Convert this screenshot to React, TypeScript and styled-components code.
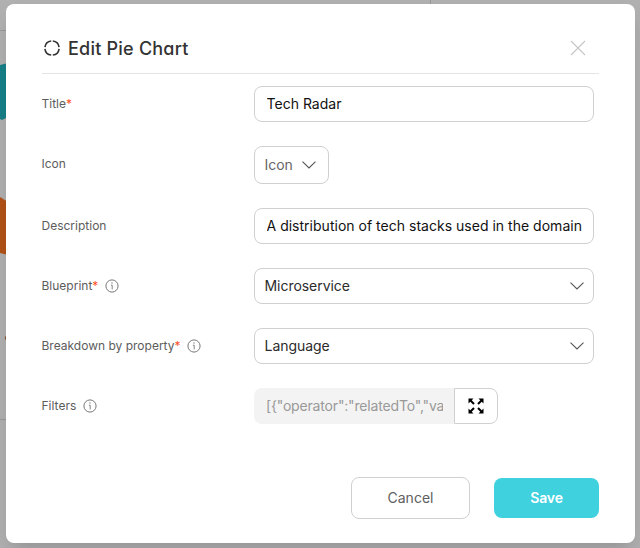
import React from "react";
import styled, { createGlobalStyle, css } from "styled-components";

const GlobalStyle = createGlobalStyle`
  *, *::before, *::after { box-sizing: border-box; }
  body { margin: 0; background: #b1b1b1; font-family: Inter, "Liberation Sans", sans-serif; }
  button, input { font-family: inherit; margin: 0; }
`;

const Page = styled.div`
  position: relative;
  width: 640px;
  height: 548px;
  overflow: hidden;
  padding: 4px 5px 5px 6px;
  background: #b1b1b1;
`;

const Backdrop = styled.svg`
  position: absolute;
  inset: 0;
`;

const Dialog = styled.section`
  position: relative;
  display: flex;
  flex-direction: column;
  width: 629px;
  height: 539px;
  padding: 20px 36px 24px;
  border-radius: 8px;
  background: #fff;
  box-shadow: 0 11px 15px -7px rgba(0, 0, 0, 0.12), 0 14px 30px 3px rgba(0, 0, 0, 0.06);
`;

const Header = styled.header`
  display: flex;
  align-items: center;
  height: 50px;
  padding: 0 0 1px 1px;
  border-bottom: 1px solid #e4e4e4;
`;

const Heading = styled.h1`
  flex: 1;
  margin: 0 0 0 7px;
  padding-top: 2px;
  font-size: 18px;
  font-weight: 500;
  font-feature-settings: "cv11";
  line-height: 24px;
  letter-spacing: 0.22px;
  color: #333;
`;

const CloseButton = styled.button`
  display: flex;
  padding: 0;
  margin-right: 13.5px;
  border: 0;
  background: none;
`;

const Form = styled.form`
  display: flex;
  flex-direction: column;
  gap: 24px;
  padding-top: 12px;
`;

const Row = styled.div`
  display: grid;
  grid-template-columns: 212px 340px;
  align-items: center;
`;

const Label = styled.label<{ $raised?: boolean }>`
  display: flex;
  align-items: center;
  margin-left: -0.5px;
  padding-bottom: ${(p) => (p.$raised ? 2 : 0)}px;
  font-size: 12px;
  line-height: 16px;
  letter-spacing: 0;
  color: #5c5c5c;
  svg { margin-left: 6.5px; }
`;

const Required = styled.span`
  color: #ff5227;
`;

const outlined = css`
  border: 1px solid #d0d0d0;
  border-radius: 8px;
  background: #fff;
`;

const TextField = styled.input`
  ${outlined}
  width: 340px;
  height: 36px;
  padding: 0 10px 1px 11.5px;
  font-size: 14px;
  letter-spacing: 0.015px;
  color: #111;
  outline: none;
`;

const SelectField = styled.button<{ $compact?: boolean }>`
  ${outlined}
  display: flex;
  align-items: center;
  justify-content: space-between;
  width: ${(p) => (p.$compact ? 75 : 340)}px;
  height: ${(p) => (p.$compact ? 38 : 36)}px;
  padding: 0 ${(p) => (p.$compact ? 12 : 9)}px 0 9.5px;
  font-size: 14px;
  letter-spacing: -0.04px;
  color: ${(p) => (p.$compact ? "#666" : "#2b2b2b")};
  span { padding-bottom: 2px; }
`;

const FilterGroup = styled.div`
  display: flex;
  height: 36px;
`;

const FilterText = styled.div`
  width: 200px;
  padding: 0 11px 0 12px;
  border-radius: 8px 0 0 8px;
  background: #f3f3f3;
  font-size: 14px;
  line-height: 36px;
  letter-spacing: -0.17px;
  color: #999;
  span { display: block; overflow: hidden; white-space: nowrap; }
`;

const ExpandButton = styled.button`
  ${outlined}
  display: flex;
  align-items: center;
  justify-content: center;
  width: 44px;
  padding: 0 1px 0 0;
  border-radius: 0 8px 8px 0;
`;

const Footer = styled.footer`
  display: flex;
  align-items: center;
  justify-content: flex-end;
  gap: 24px;
  margin-top: auto;
`;

const ActionButton = styled.button<{ $primary?: boolean }>`
  width: ${(p) => (p.$primary ? 105 : 119)}px;
  height: ${(p) => (p.$primary ? 40 : 42)}px;
  padding: 0 0 2px;
  border: ${(p) => (p.$primary ? "0" : "1px solid #d0d0d0")};
  border-radius: 8px;
  background: ${(p) => (p.$primary ? "#40d1df" : "#fff")};
  color: ${(p) => (p.$primary ? "#fff" : "#606060")};
  font-size: 14px;
  font-weight: ${(p) => (p.$primary ? 600 : 400)};
  letter-spacing: ${(p) => (p.$primary ? -0.1 : 0)}px;
`;

const RingIcon = () => (
  <svg width="18" height="18" viewBox="0 0 18 18" fill="none" stroke="#333" strokeWidth="1.6">
    <circle cx="9" cy="9" r="7.1" pathLength="80" strokeDasharray="17 3" strokeDashoffset="-1.5" />
  </svg>
);

const CloseIcon = () => (
  <svg width="16" height="16" viewBox="0 0 16 16" stroke="#c6c6c6" strokeWidth="1.1">
    <path d="M1 1 15 15M15 1 1 15" />
  </svg>
);

const ChevronIcon = () => (
  <svg width="14" height="8" viewBox="0 0 14 8" fill="none" stroke="#555" strokeWidth="1.1">
    <path d="m.5.7 6.5 6.3L13.5.7" />
  </svg>
);

const InfoIcon = () => (
  <svg width="14" height="14" viewBox="0 0 14 14" fill="none" stroke="#777" strokeWidth="1">
    <circle cx="7" cy="7" r="6.1" />
    <path d="M5.9 6.2H7.2V10.4" strokeWidth=".9" />
    <circle cx="7" cy="4" r=".65" fill="#777" stroke="none" />
  </svg>
);

const ExpandIcon = () => (
  <svg width="16" height="16" viewBox="0 0 16 16" fill="#000" stroke="#000" strokeWidth="2">
    <path d="m2 2 4 4M14 2l-4 4M2 14l4-4m8 4-4-4" />
    <path stroke="none" d="M.5.5h5l-5 5zM15.5.5h-5l5 5zM.5 15.5h5l-5-5zM15.5 15.5h-5l5-5z" />
  </svg>
);

type FieldProps = {
  label: string;
  required?: boolean;
  info?: boolean;
  raised?: boolean;
  children: React.ReactNode;
};

const Field = ({ label, required, info, raised, children }: FieldProps) => (
  <Row>
    <Label $raised={raised}>
      {label}
      {required && <Required>*</Required>}
      {info && <InfoIcon />}
    </Label>
    {children}
  </Row>
);

export default function App() {
  return (
    <>
      <GlobalStyle />
      <Page>
        <Backdrop width="640" height="548" viewBox="0 0 640 548">
          <path d="M0 30.5h8M0 419.5h8M430.5 0v6" stroke="#999" />
          <path d="M0 65 8 63v54l-6 3-2-1z" fill="#178189" />
          <path d="m0 197 8 5v53l-8-2z" fill="#b35318" />
          <circle cx="7" cy="338" r="2.2" fill="#8e5330" />
        </Backdrop>
        <Dialog>
          <Header>
            <RingIcon />
            <Heading>Edit Pie Chart</Heading>
            <CloseButton type="button" aria-label="Close">
              <CloseIcon />
            </CloseButton>
          </Header>
          <Form>
            <Field label="Title" required>
              <TextField defaultValue="Tech Radar" />
            </Field>
            <Field label="Icon" raised>
              <SelectField type="button" $compact>
                <span>Icon</span>
                <ChevronIcon />
              </SelectField>
            </Field>
            <Field label="Description">
              <TextField defaultValue="A distribution of tech stacks used in the domain" />
            </Field>
            <Field label="Blueprint" required info>
              <SelectField type="button">
                <span>Microservice</span>
                <ChevronIcon />
              </SelectField>
            </Field>
            <Field label="Breakdown by property" required info>
              <SelectField type="button">
                <span>Language</span>
                <ChevronIcon />
              </SelectField>
            </Field>
            <Field label="Filters" info>
              <FilterGroup>
                <FilterText>
                  <span>{'[{"operator":"relatedTo","va'}</span>
                </FilterText>
                <ExpandButton type="button" aria-label="Expand">
                  <ExpandIcon />
                </ExpandButton>
              </FilterGroup>
            </Field>
          </Form>
          <Footer>
            <ActionButton type="button">Cancel</ActionButton>
            <ActionButton type="button" $primary>
              Save
            </ActionButton>
          </Footer>
        </Dialog>
      </Page>
    </>
  );
}
